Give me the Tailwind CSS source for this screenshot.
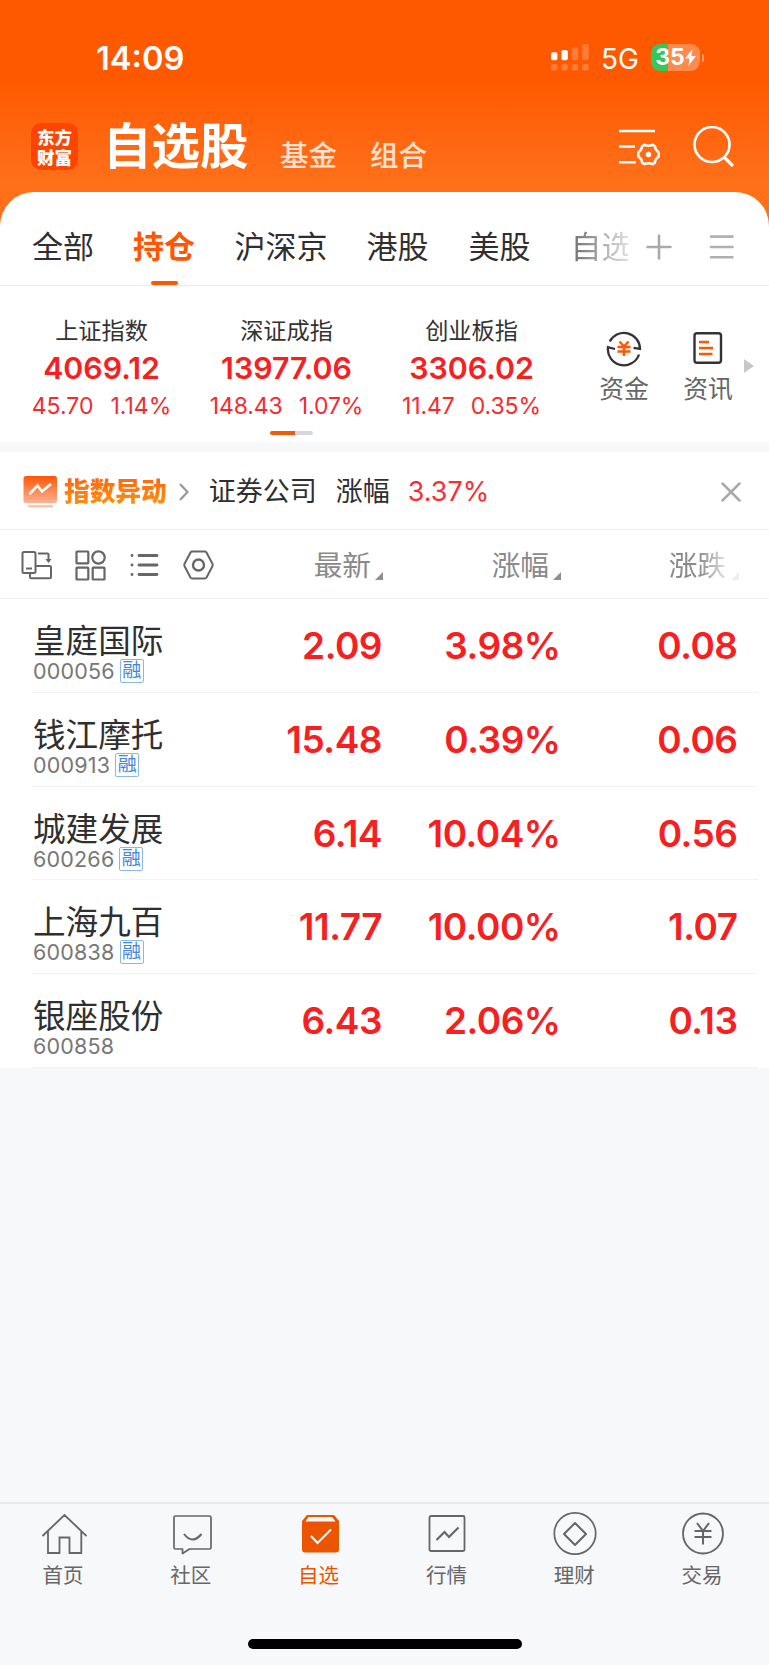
<!DOCTYPE html>
<html lang="zh-CN">
<head>
  <meta charset="UTF-8">
  <meta name="viewport" content="width=device-width, initial-scale=1.0">
  <title>自选股</title>
  <script src="https://cdn.jsdelivr.net/npm/@tailwindcss/browser@4"></script>
</head>
<body class="bg-[#f7f8fa] font-['Inter','Noto_Sans_CJK_SC',sans-serif] text-[#2f2f2f] whitespace-nowrap overflow-hidden">
  <div class="w-[769px] h-[1665px] flex flex-col">

    <!-- Header -->
    <header class="h-[230px] shrink-0 bg-linear-to-b from-[#ff5900] from-35% to-[#ff7019] to-80% text-white">
      <!-- Status bar -->
      <div class="h-[115px] pl-24 pr-[65px] flex items-center justify-between">
        <span class="pt-[2px] text-[32.7px] font-semibold leading-none">14:09</span>
        <div class="flex items-center">
          <svg class="w-[38px] h-[27px]" viewBox="0 0 38 27" fill="#fff">
            <rect x="0" y="8.3" width="6.4" height="8" rx="2"/>
            <rect x="10.4" y="6" width="6.4" height="10.3" rx="2"/>
            <g fill-opacity=".22">
              <rect x="20.8" y="3.2" width="6.4" height="13" rx="2"/>
              <rect x="31.2" y="0" width="6.4" height="16.3" rx="2"/>
              <rect x="0" y="20" width="6.4" height="6.6" rx="2"/>
              <rect x="10.4" y="20" width="6.4" height="6.6" rx="2"/>
              <rect x="20.8" y="20" width="6.4" height="6.6" rx="2"/>
              <rect x="31.2" y="20" width="6.4" height="6.6" rx="2"/>
            </g>
          </svg>
          <span class="w-[62px] pt-[2px] text-center text-[28px] leading-none">5G</span>
          <div class="w-[49px] h-[27px] rounded-[9px] flex items-center justify-center bg-linear-to-r from-[#34c759] from-35% to-[#ff8a4d] to-35% text-[23px] font-bold leading-none">
            35
            <svg class="w-[11px] h-[17px]" viewBox="0 0 11 17" fill="#fff"><path d="M7.5 0 0 9.5h4.6L3.300 17 11 7H6.300z"/></svg>
          </div>
          <div class="w-[2px] h-2 ml-[2px] rounded-r bg-white/40"></div>
        </div>
      </div>
      <!-- Title bar -->
      <div class="h-[64px] pl-[31px] pr-[34px] flex items-center">
        <div class="w-[47px] h-[47px] mb-[1px] rounded-[10px] bg-[#ff4400] flex flex-col items-center justify-center font-['Noto_Sans_CJK_SC',sans-serif] text-[17.5px] font-black leading-[19.5px]">
          <span>东方</span>
          <span>财富</span>
        </div>
        <h1 class="ml-[25px] text-[48.5px] font-bold leading-[52px]">自选股</h1>
        <span class="ml-[31.5px] mt-[19px] text-[28.5px] font-medium leading-none text-white/80">基金</span>
        <span class="ml-[33px] mt-[19px] text-[28.5px] font-medium leading-none text-white/80">组合</span>
        <svg class="w-[42px] h-[40px] mb-[1px] ml-auto" viewBox="0 0 42 40" fill="none" stroke="#fff" stroke-width="2.6">
          <path d="M0 4h36M0 19.500h16M0 35.300h17"/>
          <path stroke-linejoin="round" d="M25.500 17.800q4 1.900 8 0l2.300 1.300q.5 4 3.900 6.400v4q-3.400 2-3.900 6.400l-2.300 1.300q-4-1.900-8 0l-2.300-1.300q-.5-4.400-3.900-6.400v-4q3.400-2.400 3.900-6.400z"/>
          <circle cx="29.5" cy="27.5" r="1.4" fill="#fff"/>
        </svg>
        <svg class="w-[42px] h-[42px] ml-8" viewBox="0 0 42 42" fill="none" stroke="#fff" stroke-width="2.7">
          <circle cx="19" cy="18.5" r="17.5"/>
          <path d="m31 31 9 9" stroke-width="3.2"/>
        </svg>
      </div>
    </header>

    <main class="relative -mt-[38px] rounded-t-[34px] bg-white h-[876px] shrink-0">
      <!-- Group tabs -->
      <nav class="h-[94px] pl-8 pr-[35px] flex items-center border-b-[1.5px] border-[#ececee] text-[31px] pt-4">
        <span class="w-[101px] pt-[2px]">全部</span>
        <span class="w-[101.5px] pt-[2px] relative font-bold text-[#ff5700]">持仓
          <i class="absolute left-[18px] top-[59px] w-[27px] h-1 rounded-[2px] bg-[#ff5700]"></i>
        </span>
        <span class="w-[132px] pt-[2px]">沪深京</span>
        <span class="w-[102px] pt-[2px]">港股</span>
        <span class="w-[102px] pt-[2px]">美股</span>
        <span class="w-[57px] pt-[2px] overflow-hidden [mask-image:linear-gradient(to_right,rgba(0,0,0,0.7),rgba(0,0,0,0.15))]">自选</span>
        <svg class="w-[26px] h-[26px] ml-[18px]" viewBox="0 0 26 26" stroke="#aaa" stroke-width="2.6" stroke-linecap="round"><path d="M13 1.500v23M1.500 13h23"/></svg>
        <svg class="w-[25px] h-[26px] ml-auto" viewBox="0 0 25 26" stroke="#b0b0b0" stroke-width="2.6" stroke-linecap="round"><path d="M2 2.600h21.500M2 13h21.500M2 23.200h21.500"/></svg>
      </nav>

      <!-- Market indices -->
      <section class="h-[156px] pl-[9px] pr-4 flex relative">
        <div class="w-[185px] pt-8 text-center leading-none text-[#f72a2d]">
          <p class="text-[23.2px] leading-[26px] text-[#333]">上证指数</p>
          <p class="mt-[9px] text-[30.3px] leading-[30px] font-semibold text-[#f8201f]">4069.12</p>
          <p class="mt-[11px] text-[23px] leading-6"><span>45.70</span><span class="ml-[17px]">1.14%</span></p>
        </div>
        <div class="w-[185px] pt-8 text-center leading-none text-[#f72a2d]">
          <p class="text-[23.2px] leading-[26px] text-[#333]">深证成指</p>
          <p class="mt-[9px] text-[30.3px] leading-[30px] font-semibold text-[#f8201f]">13977.06</p>
          <p class="mt-[11px] text-[23px] leading-6 tracking-[-0.1px]"><span>148.43</span><span class="ml-[16px]">1.07%</span></p>
        </div>
        <div class="w-[185px] pt-8 text-center leading-none text-[#f72a2d]">
          <p class="text-[23.2px] leading-[26px] text-[#333]">创业板指</p>
          <p class="mt-[9px] text-[30.3px] leading-[30px] font-semibold text-[#f8201f]">3306.02</p>
          <p class="mt-[11px] text-[23px] leading-6 tracking-[-0.1px]"><span>11.47</span><span class="ml-[16px]">0.35%</span></p>
        </div>
        <div class="w-[84px] ml-[18px] pt-[43px] flex flex-col items-center text-[24.8px] leading-[26px] text-[#666]">
          <svg class="w-[38px] h-[38px] mb-[9px]" viewBox="0 0 38 38" fill="none" stroke="#333" stroke-width="2.3">
            <path d="M4.800 12.500A16 16 0 0 1 35 19.800l-6.500-1M34 25.500A16 16 0 0 1 3 18.200l7 1.800"/>
            <path d="m14.500 12.500 4.500 5 4.500-5M12.500 18h13M12.500 22.500h13M19 17.500V27" stroke="#ff5700" stroke-width="2.5"/>
          </svg>
          资金
        </div>
        <div class="w-[84px] pt-[43px] flex flex-col items-center text-[24.8px] leading-[26px] text-[#666]">
          <svg class="w-[38px] h-[38px] mb-[9px]" viewBox="0 0 38 38" fill="none" stroke="#333" stroke-width="2.4">
            <rect x="5.5" y="4.300" width="26.5" height="29.5" rx="2.5"/>
            <path d="M10 13h10M10 19h14M10 25h13.500" stroke="#ff5700" stroke-width="2.5"/>
          </svg>
          资讯
        </div>
        <svg class="w-[10px] h-[14px] absolute left-[744px] top-[73px]" viewBox="0 0 10 14" fill="#c8c8c8"><path d="M0 0v14l10-7z"/></svg>
        <div class="absolute left-[270px] top-[145px] w-[43px] h-[4px] rounded-full bg-linear-to-r from-[#f05a0a] from-58% to-[#d5d7dc] to-58%"></div>
      </section>

      <div class="h-[10px] bg-[#f7f8fa]"></div>

      <!-- Index alert -->
      <section class="h-[78px] pl-[23px] pr-[28px] flex items-center border-b-[1.5px] border-[#eeeeef] text-[27px] leading-8 pt-[2px]">
        <svg class="w-[35px] h-[32px]" viewBox="0 0 35 32">
          <defs>
            <linearGradient id="alertFill" x1="0" y1="0" x2="0" y2="1">
              <stop offset="0" stop-color="#ff5608"/>
              <stop offset="1" stop-color="#ffb293"/>
            </linearGradient>
          </defs>
          <rect x=".5" y="0" width="33.5" height="27" rx="2.5" fill="url(#alertFill)"/>
          <rect x="5" y="29" width="25" height="2.5" rx="1" fill="#ffc2a3"/>
          <path d="m6.500 18 8-8.500 4.500 6L28 8" fill="none" stroke="#fff" stroke-width="2.6"/>
        </svg>
        <b class="ml-[6px] text-[25.7px] font-black bg-linear-to-b from-[#ff6410] to-[#ff9410] bg-clip-text text-transparent">指数异动</b>
        <svg class="w-[10px] h-[18px] ml-[12px]" viewBox="0 0 10 18" fill="none" stroke="#999" stroke-width="2.3"><path d="m1 1 7.500 8L1 17"/></svg>
        <span class="ml-[20px] pt-[1px]">证券公司</span>
        <span class="ml-[19px] pt-[1px]">涨幅</span>
        <span class="ml-[18px] pt-[1px] text-[#fa2d32]">3.37%</span>
        <svg class="w-5 h-5 ml-auto" viewBox="0 0 20 20" stroke="#aaa" stroke-width="2.5" stroke-linecap="round"><path d="m1.500 1.500 17 17M18.500 1.500l-17 17"/></svg>
      </section>

      <!-- Table header -->
      <section class="h-[69px] pl-[21px] pt-[2px] flex items-center border-b-[1.5px] border-[#f1f1f2] text-[28.7px] text-[#8a8a8a]">
        <svg class="w-[31px] h-[30px]" viewBox="0 0 31 30" fill="none" stroke="#666" stroke-width="2">
          <rect x="1.5" y="2" width="13" height="21" rx="1.5"/>
          <path d="M5 18.500h6M17 3.500h9.500q1 0 1 1v7M9 23v4q0 1.200 1.200 1.200h18.600q1.200 0 1.200-1.200V17.200q0-1.200-1.200-1.200H15"/>
          <path d="M24.500 9h6l-3 4z" fill="#666" stroke="none"/>
        </svg>
        <svg class="w-[31px] h-[31px] ml-[23px]" viewBox="0 0 31 31" fill="none" stroke="#666" stroke-width="2.2">
          <rect x="1.5" y="1.5" width="11.8" height="11.8" rx=".5"/>
          <circle cx="23.5" cy="7.500" r="6.2"/>
          <rect x="1.5" y="17.7" width="11.8" height="11.8" rx=".5"/>
          <rect x="17.7" y="17.7" width="11.8" height="11.8" rx=".5"/>
        </svg>
        <svg class="w-[29px] h-[24px] ml-[24px]" viewBox="0 0 29 24" stroke="#666" stroke-width="2.8" stroke-linecap="round">
          <path d="M9 2.500h18M9 12h18M9 21.500h18M2 2.500h.1M2 12h.1M2 21.500h.1"/>
        </svg>
        <svg class="w-[31px] h-[30px] ml-[24px]" viewBox="0 0 31 30" fill="none" stroke="#666" stroke-width="2">
          <path stroke-linejoin="round" d="M9.300 1.500h12.400q1.200 0 1.800 1l5.800 11q.8 1.500 0 3l-5.800 11q-.6 1-1.800 1H9.300q-1.200 0-1.800-1L1.700 16.500q-.8-1.500 0-3l5.800-11q.6-1 1.800-1z"/>
          <circle cx="15.5" cy="15" r="5.5" stroke-width="2.4"/>
        </svg>
        <div class="w-[169px] pt-[1px] flex items-center justify-end">最新<svg class="w-2 h-2 ml-[4px] mt-[21px]" viewBox="0 0 8 8" fill="#8e8e93"><path d="M8 0v8H0z"/></svg></div>
        <div class="w-[178px] pt-[1px] flex items-center justify-end">涨幅<svg class="w-2 h-2 ml-[4px] mt-[21px]" viewBox="0 0 8 8" fill="#8e8e93"><path d="M8 0v8H0z"/></svg></div>
        <div class="w-[178px] pt-[1px] flex items-center justify-end [mask-image:linear-gradient(to_right,#000_77%,rgba(0,0,0,0.15)_95%)]">涨跌<svg class="w-2 h-2 ml-[5px] mt-[21px]" viewBox="0 0 8 8" fill="#8e8e93"><path d="M8 0v8H0z"/></svg></div>
      </section>

      <!-- Holdings -->
      <ul class="pl-8 pr-[11px] text-[37px] font-semibold text-[#f8201f] tracking-[-0.5px]">
        <li class="h-[93.8px] flex border-b-[1.5px] border-[#f3f3f4] text-right">
          <div class="w-[171px] pl-[1px] pt-[24px] text-left font-normal tracking-normal">
            <p class="text-[32.6px] leading-9 text-[#2f2f2f]">皇庭国际</p>
            <p class="flex items-center h-6 text-[21.5px] leading-6 tracking-[0.2px] text-[#777]">000056<span class="ml-[5px] w-6 h-6 border-[1.5px] border-[#8bb8ec] rounded-[2px] text-[19px] leading-[22px] text-center text-[#3b86df]">融</span></p>
          </div>
          <span class="w-[179px] leading-[93px]">2.09</span><span class="w-[178.5px] leading-[93px]">3.98%</span><span class="w-[177px] leading-[93px]">0.08</span>
        </li>
        <li class="h-[93.8px] flex border-b-[1.5px] border-[#f3f3f4] text-right">
          <div class="w-[171px] pl-[1px] pt-[24px] text-left font-normal tracking-normal">
            <p class="text-[32.6px] leading-9 text-[#2f2f2f]">钱江摩托</p>
            <p class="flex items-center h-6 text-[21.5px] leading-6 tracking-[0.2px] text-[#777]">000913<span class="ml-[5px] w-6 h-6 border-[1.5px] border-[#8bb8ec] rounded-[2px] text-[19px] leading-[22px] text-center text-[#3b86df]">融</span></p>
          </div>
          <span class="w-[179px] leading-[93px]">15.48</span><span class="w-[178.5px] leading-[93px]">0.39%</span><span class="w-[177px] leading-[93px]">0.06</span>
        </li>
        <li class="h-[93.8px] flex border-b-[1.5px] border-[#f3f3f4] text-right">
          <div class="w-[171px] pl-[1px] pt-[24px] text-left font-normal tracking-normal">
            <p class="text-[32.6px] leading-9 text-[#2f2f2f]">城建发展</p>
            <p class="flex items-center h-6 text-[21.5px] leading-6 tracking-[0.2px] text-[#777]">600266<span class="ml-[5px] w-6 h-6 border-[1.5px] border-[#8bb8ec] rounded-[2px] text-[19px] leading-[22px] text-center text-[#3b86df]">融</span></p>
          </div>
          <span class="w-[179px] leading-[93px]">6.14</span><span class="w-[178.5px] leading-[93px]">10.04%</span><span class="w-[177px] leading-[93px]">0.56</span>
        </li>
        <li class="h-[93.8px] flex border-b-[1.5px] border-[#f3f3f4] text-right">
          <div class="w-[171px] pl-[1px] pt-[24px] text-left font-normal tracking-normal">
            <p class="text-[32.6px] leading-9 text-[#2f2f2f]">上海九百</p>
            <p class="flex items-center h-6 text-[21.5px] leading-6 tracking-[0.2px] text-[#777]">600838<span class="ml-[5px] w-6 h-6 border-[1.5px] border-[#8bb8ec] rounded-[2px] text-[19px] leading-[22px] text-center text-[#3b86df]">融</span></p>
          </div>
          <span class="w-[179px] leading-[93px]">11.77</span><span class="w-[178.5px] leading-[93px]">10.00%</span><span class="w-[177px] leading-[93px]">1.07</span>
        </li>
        <li class="h-[93.8px] flex border-b-[1.5px] border-[#f3f3f4] text-right">
          <div class="w-[171px] pl-[1px] pt-[24px] text-left font-normal tracking-normal">
            <p class="text-[32.6px] leading-9 text-[#2f2f2f]">银座股份</p>
            <p class="flex items-center h-6 text-[21.5px] leading-6 tracking-[0.2px] text-[#777]">600858</p>
          </div>
          <span class="w-[179px] leading-[93px]">6.43</span><span class="w-[178.5px] leading-[93px]">2.06%</span><span class="w-[177px] leading-[93px]">0.13</span>
        </li>
      </ul>
    </main>

    <!-- Bottom navigation -->
    <footer class="mt-auto h-[163px] shrink-0 border-t-2 border-[#e8e9eb] flex flex-col">
      <nav class="w-[767px] grid grid-cols-6 text-center text-[20.5px] leading-6 text-[#666] h-[135px] pt-[7px]">
        <div class="flex flex-col items-center">
          <svg class="w-[46px] h-[46px] mb-[7px]" viewBox="0 0 46 46" fill="none" stroke="#666" stroke-width="1.8">
            <path d="M1.500 25 23.500 4l22 21M7 20.500V42h11.500V26.500h10V42h11.800V20.500"/>
          </svg>
          <span class="mr-[2px]">首页</span>
        </div>
        <div class="flex flex-col items-center">
          <svg class="w-[46px] h-[46px] mb-[7px]" viewBox="0 0 46 46" fill="none" stroke="#666" stroke-width="1.7" stroke-linejoin="round">
            <path d="M6.500 5h34q1.500 0 1.500 1.500v30q0 1.500-1.500 1.500H20.500L13.500 42.500V38h-7Q5 38 5 36.500v-30Q5 5 6.500 5z"/>
            <path d="M15 23q8.500 11 17.500 0" stroke-width="2"/>
          </svg>
          <span class="mr-[2px]">社区</span>
        </div>
        <div class="flex flex-col items-center text-[#eb5500]">
          <svg class="w-[46px] h-[46px] mb-[7px]" viewBox="0 0 46 46" fill="none">
            <path d="M10 4h27l5 6v28.500q0 3-3 3H8q-3 0-3-3V10z" fill="#eb5500"/>
            <path d="M11.500 6h23.500l3.500 4.500h-30z" fill="#f7f8fa"/>
            <path d="m14 25 6.500 7L34 18.500" stroke="#fff" stroke-width="2"/>
          </svg>
          <span class="mr-[2px]">自选</span>
        </div>
        <div class="flex flex-col items-center">
          <svg class="w-[46px] h-[46px] mb-[7px]" viewBox="0 0 46 46" fill="none" stroke="#666" stroke-width="1.8">
            <rect x="5.5" y="5" width="35" height="35" rx="1.5"/>
            <path d="m12.500 29 8-8 4.500 5 9.500-9.500" stroke-width="2.2"/>
          </svg>
          <span class="mr-[2px]">行情</span>
        </div>
        <div class="flex flex-col items-center">
          <svg class="w-[46px] h-[46px] mb-[7px]" viewBox="0 0 46 46" fill="none" stroke="#666" stroke-width="1.7">
            <circle cx="23" cy="22.5" r="20.7"/>
            <path d="M23 12 34 23 23 34 12 23z" stroke-width="2" stroke-linejoin="round"/>
          </svg>
          <span class="mr-[2px]">理财</span>
        </div>
        <div class="flex flex-col items-center">
          <svg class="w-[46px] h-[46px] mb-[7px]" viewBox="0 0 46 46" fill="none" stroke="#666" stroke-width="1.8">
            <circle cx="23" cy="22.5" r="20"/>
            <path d="m17 12 6 8 6-8M14.500 20h17M14.500 26h17M23 20v13.500" stroke-width="2"/>
          </svg>
          <span class="mr-[2px]">交易</span>
        </div>
      </nav>
      <div class="w-[274px] h-[10px] ml-[247.5px] rounded-full bg-black"></div>
    </footer>
  </div>
</body>
</html>
